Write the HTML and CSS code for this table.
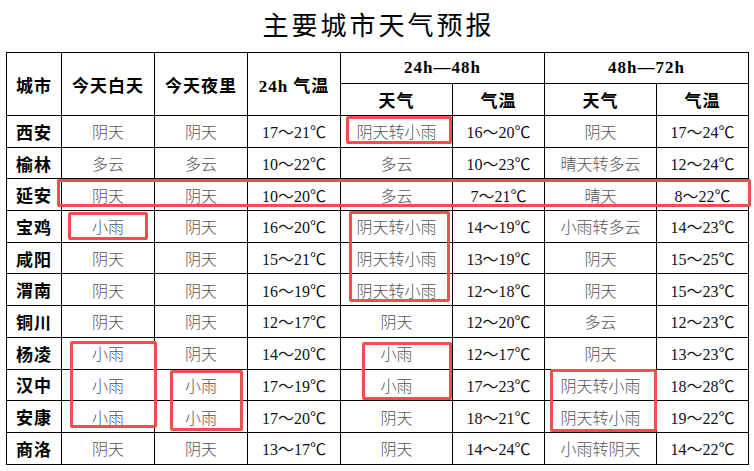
FILE: index.html
```html
<!DOCTYPE html>
<html lang="zh-CN">
<head>
<meta charset="utf-8">
<title>主要城市天气预报</title>
<link rel="stylesheet" href="styles.css">
</head>
<body>
<div class="page">
  <h1 class="title">主要城市天气预报</h1>
  <table class="wx">
    <colgroup>
      <col class="c-city"><col class="c-mid"><col class="c-mid"><col class="c-mid">
      <col class="c-wide"><col class="c-narrow"><col class="c-wide"><col class="c-narrow">
    </colgroup>
    <thead>
      <tr class="h1">
        <th rowspan="2">城市</th>
        <th rowspan="2">今天白天</th>
        <th rowspan="2">今天夜里</th>
        <th rowspan="2">24h 气温</th>
        <th colspan="2">24h—48h</th>
        <th colspan="2">48h—72h</th>
      </tr>
      <tr class="h2">
        <th>天气</th><th>气温</th><th>天气</th><th>气温</th>
      </tr>
    </thead>
    <tbody>
      <tr><th>西安</th><td class="w">阴天</td><td class="w">阴天</td><td class="t">17～21℃</td><td class="w">阴天转小雨</td><td class="t">16～20℃</td><td class="w">阴天</td><td class="t">17～24℃</td></tr>
      <tr><th>榆林</th><td class="w">多云</td><td class="w">多云</td><td class="t">10～22℃</td><td class="w">多云</td><td class="t">10～23℃</td><td class="w">晴天转多云</td><td class="t">12～24℃</td></tr>
      <tr><th>延安</th><td class="w">阴天</td><td class="w">阴天</td><td class="t">10～20℃</td><td class="w">多云</td><td class="t">7～21℃</td><td class="w">晴天</td><td class="t">8～22℃</td></tr>
      <tr><th>宝鸡</th><td class="w">小雨</td><td class="w">阴天</td><td class="t">16～20℃</td><td class="w">阴天转小雨</td><td class="t">14～19℃</td><td class="w">小雨转多云</td><td class="t">14～23℃</td></tr>
      <tr><th>咸阳</th><td class="w">阴天</td><td class="w">阴天</td><td class="t">15～21℃</td><td class="w">阴天转小雨</td><td class="t">13～19℃</td><td class="w">阴天</td><td class="t">15～25℃</td></tr>
      <tr><th>渭南</th><td class="w">阴天</td><td class="w">阴天</td><td class="t">16～19℃</td><td class="w">阴天转小雨</td><td class="t">12～18℃</td><td class="w">阴天</td><td class="t">15～23℃</td></tr>
      <tr><th>铜川</th><td class="w">阴天</td><td class="w">阴天</td><td class="t">12～17℃</td><td class="w">阴天</td><td class="t">12～20℃</td><td class="w">多云</td><td class="t">12～23℃</td></tr>
      <tr><th>杨凌</th><td class="w">小雨</td><td class="w">阴天</td><td class="t">14～20℃</td><td class="w">小雨</td><td class="t">12～17℃</td><td class="w">阴天</td><td class="t">13～23℃</td></tr>
      <tr><th>汉中</th><td class="w">小雨</td><td class="w">小雨</td><td class="t">17～19℃</td><td class="w">小雨</td><td class="t">17～23℃</td><td class="w">阴天转小雨</td><td class="t">18～28℃</td></tr>
      <tr><th>安康</th><td class="w">小雨</td><td class="w">小雨</td><td class="t">17～20℃</td><td class="w">阴天</td><td class="t">18～21℃</td><td class="w">阴天转小雨</td><td class="t">19～22℃</td></tr>
      <tr><th>商洛</th><td class="w">阴天</td><td class="w">阴天</td><td class="t">13～17℃</td><td class="w">阴天</td><td class="t">14～24℃</td><td class="w">小雨转阴天</td><td class="t">14～22℃</td></tr>
    </tbody>
  </table>
  <div class="mark m1"></div>
  <div class="mark m2"></div>
  <div class="mark m3"></div>
  <div class="mark m4"></div>
  <div class="mark m5"></div>
  <div class="mark m6"></div>
  <div class="mark m7"></div>
  <div class="mark m8"></div>
</div>
</body>
</html>
```
FILE: styles.css
```css
html, body {
  margin: 0;
  padding: 0;
  background: #fff;
}
.page {
  position: relative;
  width: 754px;
  height: 471px;
  font-family: "Liberation Serif", "Noto Sans CJK SC", serif;
  color: #000;
}
.title {
  margin: 0;
  height: 52px;
  line-height: 47px;
  text-align: center;
  font-family: "Noto Sans CJK SC", sans-serif;
  font-weight: 400;
  font-size: 26px;
  letter-spacing: 3px;
  padding-left: 3px;
  box-sizing: border-box;
}
.wx {
  margin-left: 6px;
  width: 743px;
  table-layout: fixed;
  border-collapse: collapse;
}
.c-city { width: 55px; }
.c-mid { width: 93px; }
.c-wide { width: 112px; }
.c-narrow { width: 92px; }
.wx th, .wx td {
  border: 1px solid #000;
  padding: 0;
  text-align: center;
  vertical-align: middle;
  white-space: nowrap;
  overflow: hidden;
}
.wx th {
  font-size: 17px;
  font-weight: 700;
  color: #000;
}
.wx thead th {
  letter-spacing: 1px;
}
.wx tbody th {
  letter-spacing: 1px;
}
.wx tr.h1 { height: 31px; }
.wx tr.h2 { height: 32px; }
.wx tbody tr { height: 31.7px; }
.wx td.w {
  font-family: "Noto Sans CJK SC", sans-serif;
  font-size: 16px;
  font-weight: 300;
  color: #555;
}
.wx td.t {
  font-size: 16px;
  color: #111;
}
.mark {
  position: absolute;
  box-sizing: border-box;
  border: 3px solid #f04f4f;
  border-radius: 2px;
}
.m1 { left: 346px; top: 116px; width: 106px; height: 28px; }
.m2 { left: 57px; top: 179px; width: 694px; height: 28px; }
.m3 { left: 68px; top: 212px; width: 80px; height: 28px; }
.m4 { left: 349px; top: 211px; width: 101px; height: 91px; }
.m5 { left: 70px; top: 341px; width: 87px; height: 87px; }
.m6 { left: 170px; top: 370px; width: 73px; height: 61px; }
.m7 { left: 362px; top: 342px; width: 90px; height: 58px; }
.m8 { left: 550px; top: 369px; width: 107px; height: 63px; }
```
